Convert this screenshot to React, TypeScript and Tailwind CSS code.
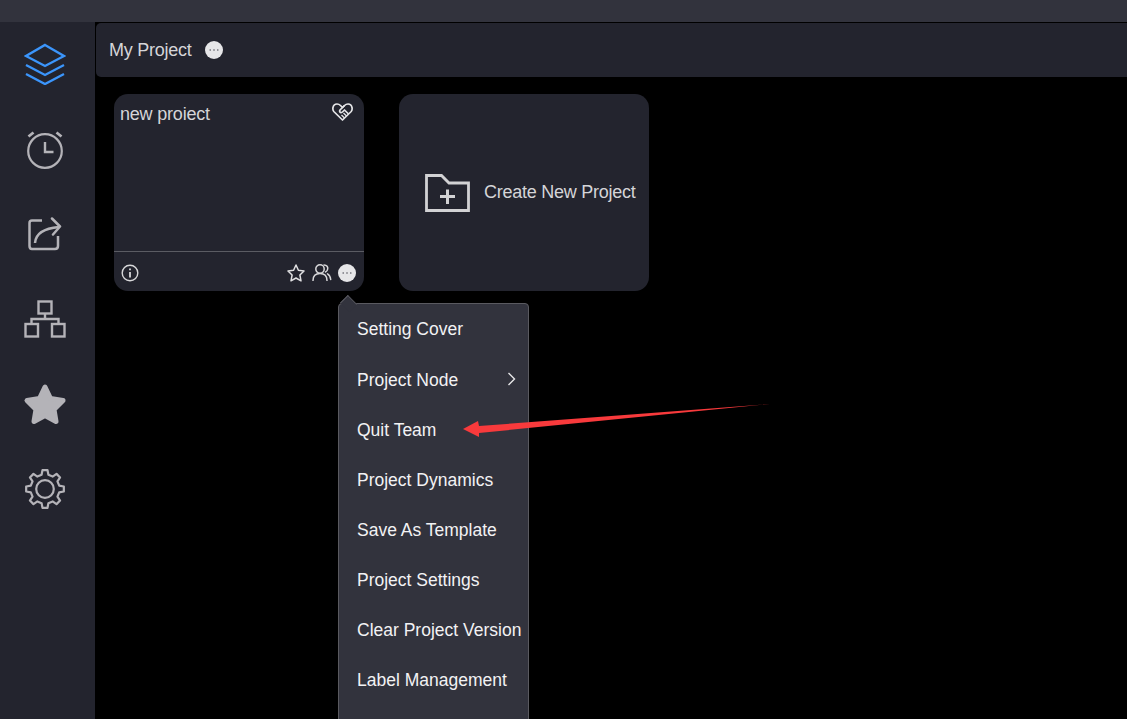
import React from "react";

const Dots = () => (
  <svg width="18" height="18" viewBox="0 0 18 18" className="shrink-0">
    <circle cx="9" cy="9" r="9" fill="#e6e6e8" />
    <circle cx="5.2" cy="9" r="0.8" fill="#55565f" />
    <circle cx="9" cy="9" r="0.8" fill="#55565f" />
    <circle cx="12.8" cy="9" r="0.8" fill="#55565f" />
  </svg>
);

const SideIcon = ({ children, top }: { children: React.ReactNode; top: number }) => (
  <div className="flex justify-center pr-[5px]" style={{ marginTop: top }}>{children}</div>
);

const gearPath = (() => {
  const cx = 20, cy = 20, teeth = 8, outer = 19, inner = 14.6;
  const pts: string[] = [];
  for (let i = 0; i < teeth; i++) {
    const a = (i / teeth) * Math.PI * 2 - Math.PI / 2;
    const s = (Math.PI * 2) / teeth;
    const offs: [number, number][] = [
      [-0.30, inner],
      [-0.17, outer],
      [0.17, outer],
      [0.30, inner],
    ];
    offs.forEach(([o, r]) => {
      const t = a + o * s;
      pts.push(`${(cx + r * Math.cos(t)).toFixed(2)} ${(cy + r * Math.sin(t)).toFixed(2)}`);
    });
  }
  return "M" + pts.join("L") + "Z";
})();

const items = ["Setting Cover", "Project Node", "Quit Team", "Project Dynamics", "Save As Template", "Project Settings", "Clear Project Version", "Label Management", ""];

export default function App() {
  return (
    <div className="relative h-[719px] w-[1127px] overflow-hidden bg-black font-['Liberation_Sans',Arial,sans-serif]">
      <div className="h-[22px] bg-[#32333d]" />
      <div className="flex h-[697px]">
        <aside className="w-[95px] shrink-0 bg-[#23242e] flex flex-col">
          <SideIcon top={21}>
            <svg width="42" height="42" viewBox="0 0 42 42" fill="none" stroke="#3b95fb" strokeWidth="2.4">
              <path d="M21 2 40 13 21 23 2 13Z" />
              <path d="M2 22 21 32 40 22" />
              <path d="M2 31 21 41 40 31" />
            </svg>
          </SideIcon>
          <SideIcon top={46}>
            <svg width="38" height="38" viewBox="0 0 38 38" fill="none" stroke="#b4b3b8" strokeWidth="2.2">
              <circle cx="19" cy="20" r="16.8" />
              <path d="M19 11v10h8.500" strokeWidth="2.4" />
              <path d="M2.500 5.500l5-4M35.500 5.500l-5-4" strokeWidth="2.8" />
            </svg>
          </SideIcon>
          <SideIcon top={48}>
            <svg width="34" height="34" viewBox="0 0 34 34" fill="none" stroke="#b4b3b8" strokeWidth="2.500" strokeLinejoin="round">
              <path d="M14 3.500H4Q1.500 3.500 1.500 6V29Q1.500 32 4 32H27Q30 32 30 29V19" />
              <path d="M7 26Q8 12 31 10" />
              <path d="M24 1.500l8 8-7 8" strokeLinecap="round" />
            </svg>
          </SideIcon>
          <SideIcon top={49}>
            <svg width="42" height="38" viewBox="0 0 42 38" fill="none" stroke="#b4b3b8" strokeWidth="2.4">
              <rect x="14.500" y="1.500" width="13" height="12" />
              <rect x="1.500" y="24" width="12.500" height="12.500" />
              <rect x="28" y="24" width="12.500" height="12.500" />
              <path d="M21 14v5M7.500 24v-5h27v5" />
            </svg>
          </SideIcon>
          <SideIcon top={45}>
            <svg width="44" height="42" viewBox="0 0 44 42" fill="#b4b3b8" stroke="#b4b3b8" strokeWidth="5" strokeLinejoin="round">
              <path d="M22 4 27.500 15.500 40 17.500 31 26.500 33 38.500 22 32.500 11 38.500 13 26.500 4 17.500 16.500 15.500Z" />
            </svg>
          </SideIcon>
          <SideIcon top={44}>
            <svg width="40" height="40" viewBox="0 0 40 40" fill="none" stroke="#b4b3b8" strokeWidth="2.200" strokeLinejoin="round">
              <path d={gearPath} />
              <circle cx="20" cy="20" r="8.800" />
            </svg>
          </SideIcon>
        </aside>

        <main className="flex-1 pl-[1px] pt-[1px]">
          <header className="h-[54px] bg-[#23242e] rounded-tl-[5px] rounded-bl-[5px] flex items-center pl-[13px] gap-[13px]">
            <span className="text-[18px] text-[#d5d5d8] tracking-[-0.25px]">My Project</span>
            <Dots />
          </header>

          <div className="flex gap-[35px] pl-[18px] pt-[17px]">
            <section className="w-[250px] h-[197px] rounded-[14px] bg-[#23242e] flex flex-col">
              <div className="flex-1 flex justify-between pl-[6px] pr-[11px] pt-[8px]">
                <span className="text-[18px] leading-[24px] text-[#d5d5d8] tracking-[-0.2px]">new proiect</span>
                <svg width="21" height="18" viewBox="0 0 21 18" fill="none" stroke="#e6e6e8" strokeWidth="1.700" strokeLinejoin="round" className="mt-[1px]">
                  <path d="M10.500 17 1.800 8.500Q0.500 7 1 4.500 1.800 1 5 1 7 1 8.500 2.500L10.500 4.500 12.500 2.500Q14 1 16 1 19.200 1 20 4.500 20.500 7 19.200 8.500Z" />
                  <path d="M12.500 2.500 8 7Q7 8.500 8.500 9.500 9.500 10 11 8.500L12.500 7 16.500 11" />
                  <path d="M14.500 13 11.500 10M12.500 15 9.500 12" strokeWidth="1.300" />
                </svg>
              </div>
              <div className="h-[40px] border-t border-[#5b5c63] flex items-center pl-[7px] pr-[8px] pt-[2px]">
                <svg width="18" height="18" viewBox="0 0 18 18" fill="none" stroke="#d8d8da" strokeWidth="1.400">
                  <circle cx="9" cy="9" r="7.800" />
                  <path d="M9 8v5.500M9 4.500v1.800" strokeWidth="1.800" />
                </svg>
                <div className="ml-auto flex items-center">
                  <svg width="18" height="18" viewBox="0 0 18 18" fill="none" stroke="#e0e0e2" strokeWidth="1.500" strokeLinejoin="round" className="mr-[7px]">
                    <path d="M9 1 11.400 6.300 17 7 12.900 11 14 16.800 9 14 4 16.800 5.100 11 1 7 6.600 6.300Z" />
                  </svg>
                  <svg width="20" height="17" viewBox="0 0 20 17" fill="none" stroke="#d8d8da" strokeWidth="1.500" strokeLinecap="round" className="mr-[6px]">
                    <circle cx="8" cy="5" r="4.200" />
                    <path d="M1 16.500C1 11.500 3.500 9.500 8 9.500S15 11.500 15 16.500" />
                    <path d="M12 1C15 1 16 3.200 15.700 5 15.400 6.800 14.500 7.600 13.500 8M15.500 9.800C17.500 10.800 18.500 13 18.700 15.500" />
                  </svg>
                  <Dots />
                </div>
              </div>
            </section>

            <section className="w-[250px] h-[197px] rounded-[14px] bg-[#23242e] flex items-center pl-[26px] gap-[14px]">
              <svg width="45" height="38" viewBox="0 0 45 38" fill="none" stroke="#d2d2d4" strokeWidth="2.800" className="shrink-0">
                <path d="M1.500 1.500H16.500L24 9H43.500V36.500H1.500Z" />
                <path d="M22.500 15.500V30M15 22.500H30" strokeWidth="3" />
              </svg>
              <span className="text-[18px] text-[#d5d5d8] tracking-[-0.25px] whitespace-nowrap">Create New Project</span>
            </section>
          </div>
        </main>
      </div>

      <div className="absolute left-[338px] top-[303px] w-[191px] h-[440px] rounded-[4px] bg-[#32333d] border border-[#5a5a60]">
        <div className="absolute -top-[7px] left-[3px] w-[13px] h-[13px] rotate-45 bg-[#32333d] border-l border-t border-[#5a5a60] scale-y-[0.85]" />
        <ul className="relative">
          <li className="h-[51px] pb-[1px] pl-[18px] flex items-center text-[17.5px] text-[#f2f2f4] whitespace-nowrap">{items[0]}</li>
          {items.slice(1).map((t, i) => (
            <li key={t + i} className="h-[50px] pl-[18px] pr-[12px] flex items-center justify-between text-[17.5px] text-[#f2f2f4] whitespace-nowrap">
              <span>{t}</span>
              {i === 0 && (
                <svg width="9" height="14" viewBox="0 0 9 14" fill="none" stroke="#e6e6e8" strokeWidth="1.400" className="shrink-0 mb-[3px]">
                  <path d="M1.500 1 7.500 7 1.500 13" />
                </svg>
              )}
            </li>
          ))}
        </ul>
      </div>

      <svg className="absolute left-0 top-0 pointer-events-none" width="1127" height="719" viewBox="0 0 1127 719">
        <polygon points="463,429 478,421 479,426 770,404 479,433 479,437" fill="#f83a3c" />
      </svg>
    </div>
  );
}
